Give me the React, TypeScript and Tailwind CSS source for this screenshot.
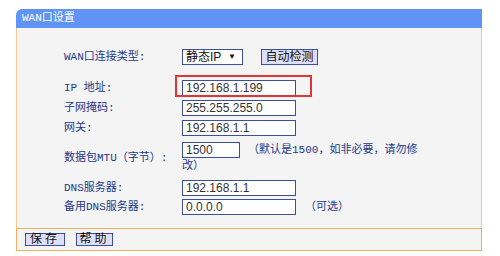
import React from "react";

const labelFont = { fontFamily: "'Liberation Mono', 'Noto Sans CJK SC', monospace" };
const sansFont = { fontFamily: "'Liberation Sans', 'Noto Sans CJK SC', sans-serif" };

function Label({ children }: { children: React.ReactNode }) {
  return (
    <div className="w-[118px] shrink-0 text-[11px] leading-[16px] text-[#22398a]" style={labelFont}>
      {children}
    </div>
  );
}

function Field({ value, w = "w-[114px]" }: { value: string; w?: string }) {
  return (
    <div
      className={`${w} h-[16px] border border-[#3c4f9c] bg-white pl-[3px] text-[12px] leading-[14px] text-[#333]`}
      style={sansFont}
    >
      {value}
    </div>
  );
}

export default function App() {
  return (
    <div className="w-[500px] h-[256px] bg-white pt-[9px] pl-[16px]">
      <div className="w-[466px] h-[242px] flex flex-col">
        <div
          className="h-[19px] bg-[#6093f6] rounded-tl-[6px] pl-[6px] text-[11px] leading-[19px] text-white"
          style={labelFont}
        >
          WAN口设置
        </div>
        <div className="h-[200px] bg-[#f4f4f5] border-x border-[#f3c994] pl-[47px] flex flex-col">
          <div className="mt-[21px] h-[16px] flex items-center">
            <Label>WAN口连接类型:</Label>
            <div
              className="w-[61px] h-[16px] border border-[#3c4f9c] bg-white pl-[3px] pr-[6px] flex items-center justify-between text-[12px] text-[#111]"
              style={sansFont}
            >
              <span>静态IP</span>
              <span className="text-[8px]">▼</span>
            </div>
            <div
              className="ml-[18px] w-[57px] h-[16px] border border-[#3c4f9c] bg-[#dcdff7] text-[12px] leading-[14px] text-center text-[#111]"
              style={sansFont}
            >
              自动检测
            </div>
          </div>
          <div className="mt-[15px] h-[16px] flex items-center">
            <Label>IP 地址:</Label>
            <div className="relative">
              <Field value="192.168.1.199" />
              <div className="absolute left-[-7px] top-[-5px] w-[137px] h-[22px] border-2 border-[#e23434]" />
            </div>
          </div>
          <div className="mt-[4px] h-[16px] flex items-center">
            <Label>子网掩码:</Label>
            <Field value="255.255.255.0" />
          </div>
          <div className="mt-[4px] h-[16px] flex items-center">
            <Label>网关:</Label>
            <Field value="192.168.1.1" />
          </div>
          <div className="mt-[6px] flex items-center">
            <Label>数据包MTU（字节）:</Label>
            <div className="text-[11px] leading-[15px] text-[#22398a]" style={labelFont}>
              <div className="flex items-center">
                <Field value="1500" w="w-[58px]" />
                <span className="ml-[8px]">（默认是1500，如非必要，请勿修</span>
              </div>
              <div className="pl-[0px] leading-[16px]">改）</div>
            </div>
          </div>
          <div className="mt-[6px] h-[16px] flex items-center">
            <Label>DNS服务器:</Label>
            <Field value="192.168.1.1" />
          </div>
          <div className="mt-[3px] h-[16px] flex items-center">
            <Label>备用DNS服务器:</Label>
            <Field value="0.0.0.0" />
            <span className="ml-[9px] text-[11px] text-[#22398a]" style={labelFont}>（可选）</span>
          </div>
        </div>
        <div className="h-[23px] bg-[#f4f4f5] border-x border-b border-t border-[#f0ad64] pl-[8px] flex items-center gap-[11px]">
          <div
            className="w-[40px] h-[13px] border border-[#3c4f9c] bg-[#dcdff7] text-[12px] leading-[11px] text-center tracking-[3px] text-[#111]"
            style={sansFont}
          >
            保存
          </div>
          <div
            className="w-[37px] h-[13px] border border-[#3c4f9c] bg-[#dcdff7] text-[12px] leading-[11px] text-center tracking-[3px] text-[#111]"
            style={sansFont}
          >
            帮助
          </div>
        </div>
      </div>
    </div>
  );
}
